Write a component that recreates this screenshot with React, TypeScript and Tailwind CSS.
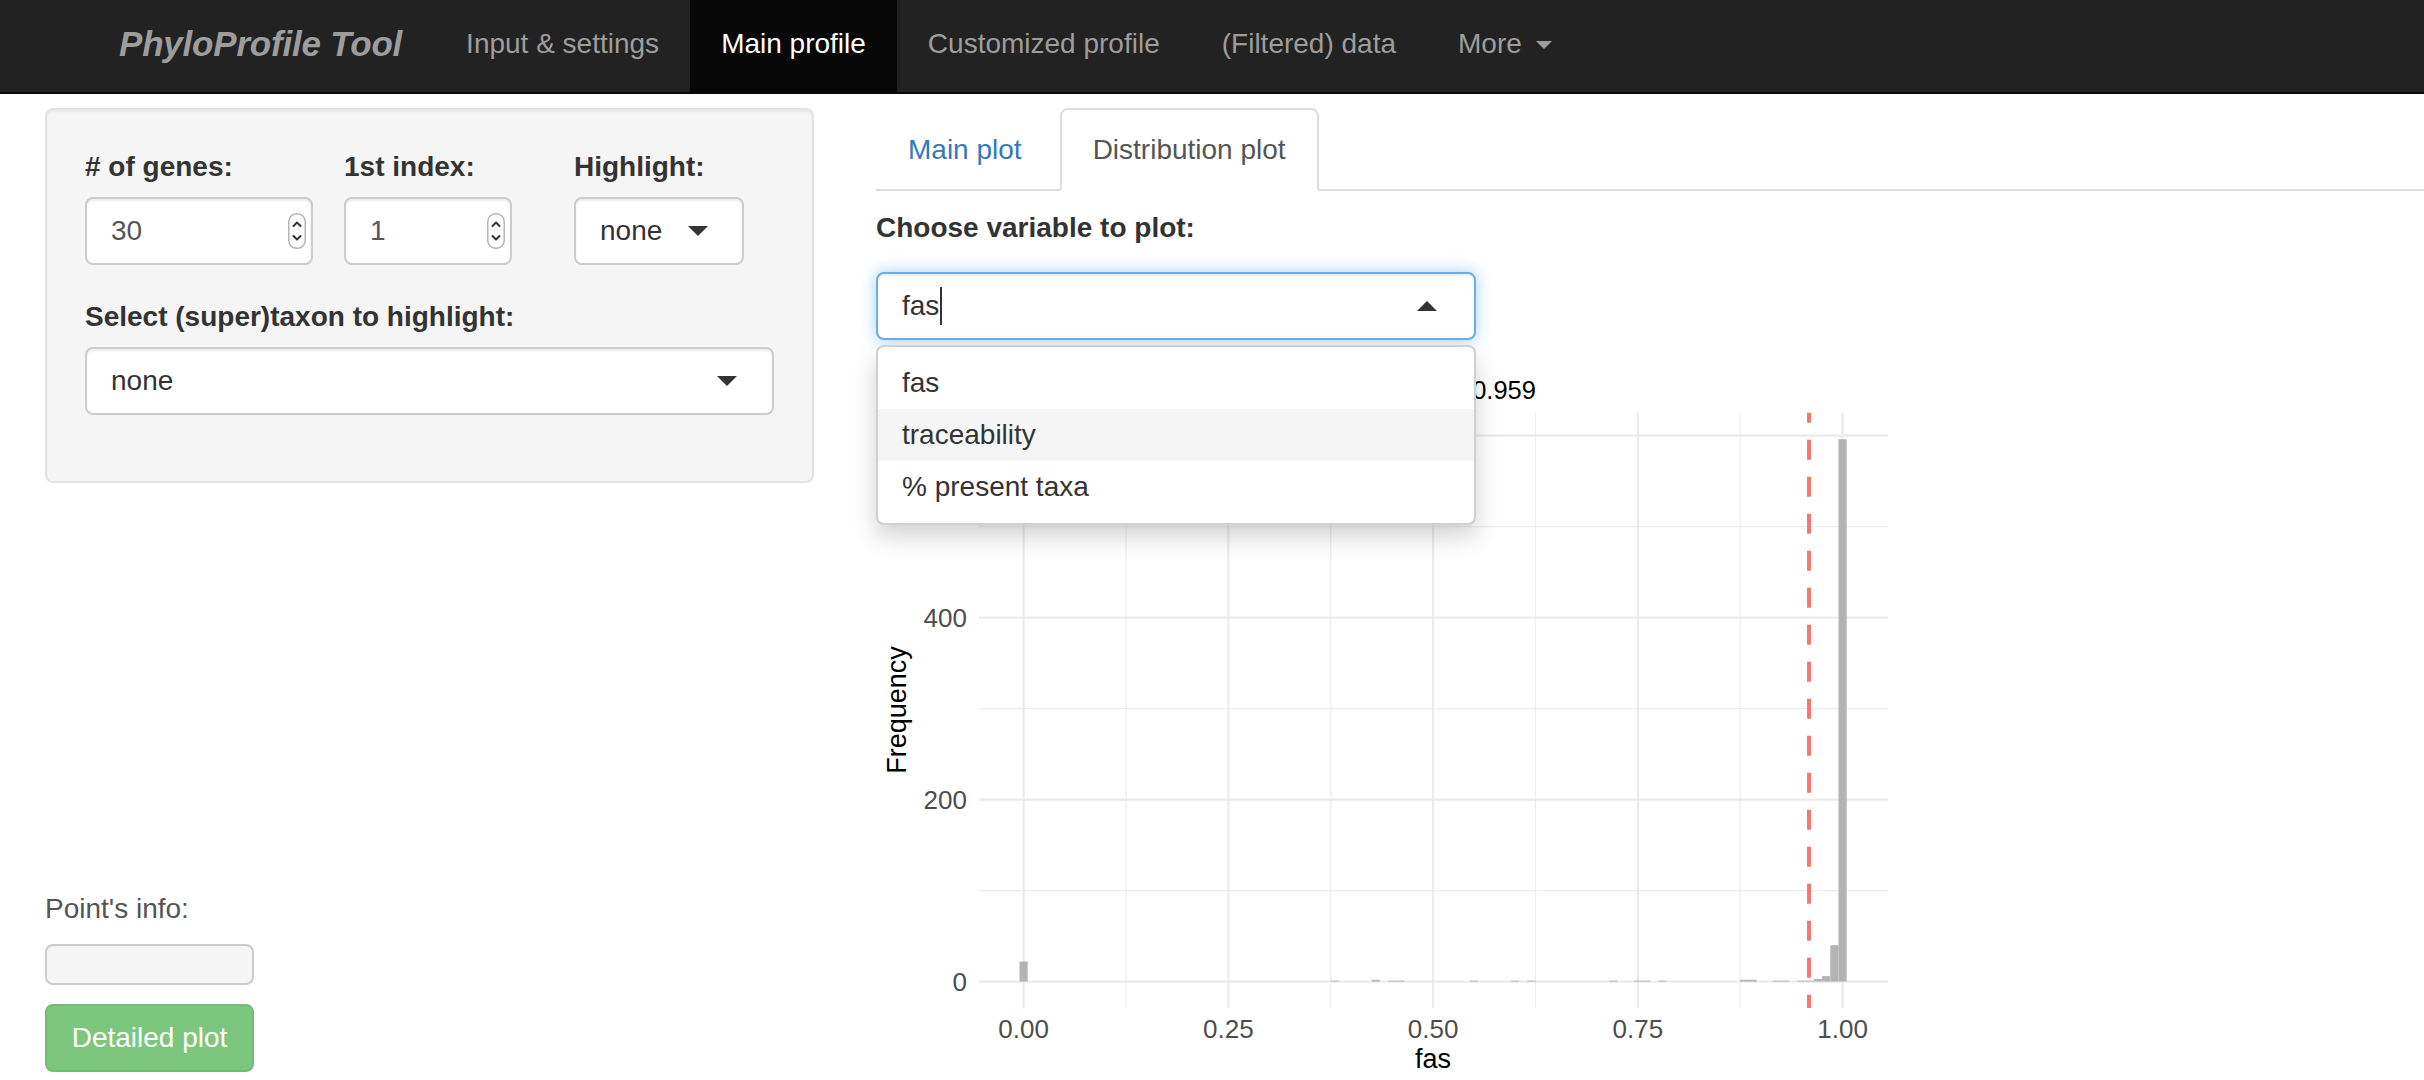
import React from "react";

const bins: [number, number][] = [
  [0, 22], [0.38, 1], [0.43, 2], [0.45, 1], [0.46, 1], [0.55, 1], [0.6, 1], [0.62, 1],
  [0.72, 1], [0.75, 1], [0.76, 1], [0.78, 1], [0.88, 2], [0.89, 2], [0.92, 1], [0.93, 1],
  [0.95, 1], [0.96, 1], [0.97, 3], [0.98, 6], [0.99, 40], [1.0, 596],
];

const X = (v: number) => 147.6 + 819 * v;
const Y = (c: number) => 621.6 - 0.91 * c;
const PT = 52.7;
const PB = 648;
const PL = 103;
const PR = 1012;

function Spinner() {
  return (
    <svg width="18" height="36" viewBox="0 0 18 36">
      <rect x="0.75" y="0.75" width="16.5" height="34.5" rx="8" fill="#fdfdfd" stroke="#b5b5b5" strokeWidth="1.5" />
      <path d="M5.5 13 L9 9.5 L12.5 13" stroke="#333" strokeWidth="2" fill="none" strokeLinecap="round" strokeLinejoin="round" />
      <path d="M5.5 23 L9 26.5 L12.5 23" stroke="#333" strokeWidth="2" fill="none" strokeLinecap="round" strokeLinejoin="round" />
    </svg>
  );
}

function CaretDown() {
  return <span className="block w-0 h-0 border-x-[10px] border-x-transparent border-t-[10px] border-t-[#333]" />;
}

function Plot() {
  const font = "Liberation Sans, Arial, Helvetica, sans-serif";
  const majorX = [0, 0.25, 0.5, 0.75, 1];
  const minorX = [0.125, 0.375, 0.625, 0.875];
  const majorY = [0, 200, 400, 600];
  const minorY = [100, 300, 500];
  return (
    <svg width="1100" height="720" viewBox="0 0 1100 720" className="block">
      {minorY.map((c) => (
        <line key={"my" + c} x1={PL} x2={PR} y1={Y(c)} y2={Y(c)} stroke="#ededed" strokeWidth="1.2" />
      ))}
      {minorX.map((v) => (
        <line key={"mx" + v} x1={X(v)} x2={X(v)} y1={PT} y2={PB} stroke="#ededed" strokeWidth="1.2" />
      ))}
      {majorY.map((c) => (
        <line key={"My" + c} x1={PL} x2={PR} y1={Y(c)} y2={Y(c)} stroke="#ebebeb" strokeWidth="2.2" />
      ))}
      {majorX.map((v) => (
        <line key={"Mx" + v} x1={X(v)} x2={X(v)} y1={PT} y2={PB} stroke="#ebebeb" strokeWidth="2.2" />
      ))}
      {bins.map(([v, c]) => (
        <rect key={"b" + v} x={X(v - 0.005)} width={819 * 0.01} y={Y(c)} height={0.91 * c} fill="#b3b3b3" />
      ))}
      <line x1={X(0.959)} x2={X(0.959)} y1={PT} y2={PB} stroke="#f8766d" strokeWidth="4" strokeDasharray="20 17" strokeDashoffset="10" />
      {majorY.map((c) => (
        <text key={"ty" + c} x="91" y={Y(c) + 9.5} textAnchor="end" fontFamily={font} fontSize="26" fill="#4d4d4d">
          {c}
        </text>
      ))}
      {majorX.map((v) => (
        <text key={"tx" + v} x={X(v)} y="678" textAnchor="middle" fontFamily={font} fontSize="26" fill="#4d4d4d">
          {v.toFixed(2)}
        </text>
      ))}
      <text x={X(0.5)} y="708" textAnchor="middle" fontFamily={font} fontSize="27" fill="#000">
        fas
      </text>
      <text
        x="0"
        y="0"
        transform="translate(30 350) rotate(-90)"
        textAnchor="middle"
        fontFamily={font}
        fontSize="27"
        fill="#000"
      >
        Frequency
      </text>
      <text x={X(0.5) + 4} y="39" textAnchor="middle" fontFamily={font} fontSize="25.5" fill="#000">
        Mean fas = 0.959
      </text>
    </svg>
  );
}

export default function App() {
  const navItems = ["Input & settings", "Main profile", "Customized profile", "(Filtered) data"];
  return (
    <div className="w-[2424px] h-[1080px] overflow-hidden bg-white text-[#333] font-['Liberation_Sans',Arial,Helvetica,sans-serif]">
      {/* Navbar */}
      <nav className="h-[94px] bg-[#222] border-b-2 border-[#080808] flex items-stretch">
        <div className="ml-[119px] pr-[33px] pb-[4px] flex items-center text-[35px] font-bold italic text-[#9d9d9d] tracking-[-0.2px]">
          PhyloProfile Tool
        </div>
        {navItems.map((n) => (
          <div
            key={n}
            className={
              n === "Main profile"
                ? "px-[31px] pb-[4px] flex items-center text-[28px] text-white bg-[#080808]"
                : "px-[31px] pb-[4px] flex items-center text-[28px] text-[#9d9d9d]"
            }
          >
            {n}
          </div>
        ))}
        <div className="px-[31px] pb-[4px] flex items-center text-[28px] text-[#9d9d9d]">
          More
          <span className="ml-[14px] mt-[2px] block w-0 h-0 border-x-[8px] border-x-transparent border-t-[8px] border-t-[#9d9d9d]" />
        </div>
      </nav>

      <div className="flex pt-[14px]">
        {/* Left column */}
        <div className="w-[769px] ml-[45px] shrink-0">
          <div className="bg-[#f5f5f5] border-2 border-[#e3e3e3] rounded-[8px] px-[38px] pt-[37px] pb-[66px] shadow-[inset_0_2px_2px_rgba(0,0,0,0.05)]">
            <div className="flex">
              <div className="w-[259px] shrink-0">
                <div className="text-[28px] leading-[40px] font-bold">
                  # of genes:
                </div>
                <div className="mt-[10px] w-[228px] h-[68px] bg-white border-2 border-[#ccc] rounded-[8px] shadow-[inset_0_2px_2px_rgba(0,0,0,0.075)] flex items-center justify-between pl-[24px] pr-[5px] text-[28px] text-[#555]">
                  <span>30</span>
                  <Spinner />
                </div>
              </div>
              <div className="w-[230px] shrink-0">
                <div className="text-[28px] leading-[40px] font-bold">
                  1st index:
                </div>
                <div className="mt-[10px] w-[168px] h-[68px] bg-white border-2 border-[#ccc] rounded-[8px] shadow-[inset_0_2px_2px_rgba(0,0,0,0.075)] flex items-center justify-between pl-[24px] pr-[5px] text-[28px] text-[#555]">
                  <span>1</span>
                  <Spinner />
                </div>
              </div>
              <div className="shrink-0">
                <div className="text-[28px] leading-[40px] font-bold">
                  Highlight:
                </div>
                <div className="mt-[10px] w-[170px] h-[68px] bg-white border-2 border-[#ccc] rounded-[8px] shadow-[inset_0_2px_2px_rgba(0,0,0,0.075)] flex items-center justify-between pl-[24px] pr-[34px] text-[28px] text-[#333]">
                  <span>none</span>
                  <CaretDown />
                </div>
              </div>
            </div>
            <div className="mt-[32px] text-[28px] leading-[40px] font-bold">
              Select (super)taxon to highlight:
            </div>
            <div className="mt-[10px] h-[68px] bg-white border-2 border-[#ccc] rounded-[8px] shadow-[inset_0_2px_2px_rgba(0,0,0,0.075)] flex items-center justify-between pl-[24px] pr-[35px] text-[28px] text-[#333]">
              <span>none</span>
              <CaretDown />
            </div>
          </div>

          <div className="mt-[406px] text-[28px] leading-[40px] text-[#555]">
            Point's info:
          </div>
          <div className="mt-[15px] w-[209px] h-[41px] bg-[#f5f5f5] border-2 border-[#ccc] rounded-[8px]" />
          <div className="mt-[19px] w-[209px] h-[68px] bg-[#7dc67d] border-2 border-[#70be70] rounded-[8px] flex items-center justify-center text-[28px] text-white">
            Detailed plot
          </div>
        </div>

        {/* Right column */}
        <div className="ml-[62px] flex-1 min-w-0">
          <div className="h-[83px] border-b-2 border-[#ddd] flex items-start">
            <div className="h-[83px] px-[30px] border-2 border-transparent flex items-center text-[28px] text-[#337ab7] mr-[6px]">
              Main plot
            </div>
            <div className="h-[83px] px-[31px] bg-white border-2 border-[#ddd] border-b-transparent rounded-t-[8px] flex items-center text-[28px] text-[#555]">
              Distribution plot
            </div>
          </div>

          <div className="mt-[17px] text-[28px] leading-[40px] font-bold">
            Choose variable to plot:
          </div>

          <div className="relative mt-[24px] w-[600px] h-[68px]">
            <div className="w-[600px] h-[68px] bg-white border-2 border-[#66afe9] rounded-[8px] shadow-[inset_0_2px_2px_rgba(0,0,0,0.075),0_0_16px_rgba(102,175,233,0.6)] flex items-center justify-between pl-[24px] pr-[37px] text-[28px] text-[#333]">
              <span className="flex items-center">
                fas
                <span className="ml-[1px] block w-[2px] h-[38px] bg-[#333]" />
              </span>
              <span className="block w-0 h-0 border-x-[10px] border-x-transparent border-b-[10px] border-b-[#333]" />
            </div>
            <div className="absolute left-0 top-[73px] z-10 w-[600px] bg-white border-2 border-[#d0d0d0] rounded-[8px] shadow-[0_12px_24px_rgba(0,0,0,0.175)] py-[10px] text-[28px] text-[#333]">
              <div className="h-[52px] px-[24px] flex items-center">fas</div>
              <div className="h-[52px] px-[24px] flex items-center bg-[#f5f5f5]">traceability</div>
              <div className="h-[52px] px-[24px] flex items-center">% present taxa</div>
            </div>
          </div>

          <div className="mt-[20px]">
            <Plot />
          </div>
        </div>
      </div>
    </div>
  );
}
